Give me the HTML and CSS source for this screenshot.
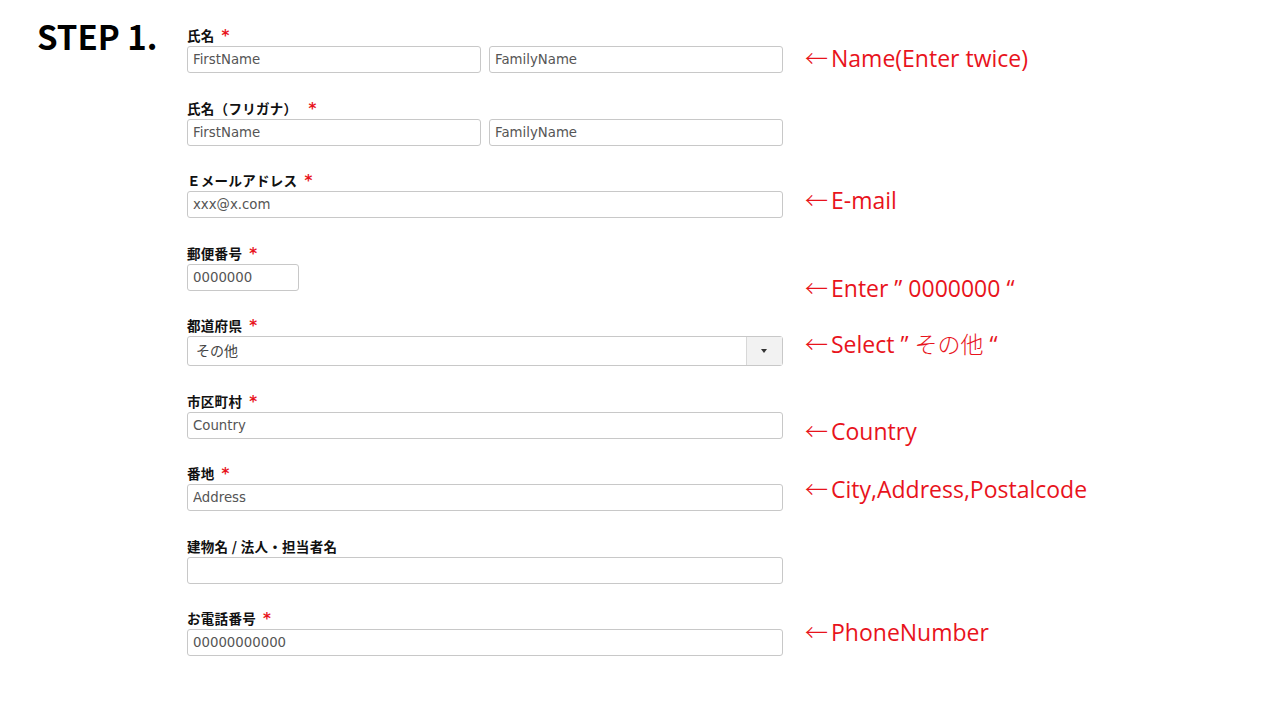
FILE: index.html
```html
<!DOCTYPE html>
<html lang="ja">
<head>
  <meta charset="UTF-8">
  <meta name="viewport" content="width=device-width, initial-scale=1.0">
  <title>STEP 1.</title>
  <link rel="stylesheet" href="styles.css">
</head>
<body>
  <div class="page">
    <h1 class="step-title">STEP 1.</h1>

    <div class="form">
      <div class="row">
        <div class="field">
          <label class="field-label">氏名<span class="req">*</span></label>
          <div class="pair">
            <input type="text" class="text-input" value="FirstName">
            <input type="text" class="text-input" value="FamilyName">
          </div>
        </div>
        <div class="note"><span class="arrow">←</span>Name(Enter twice)</div>
      </div>

      <div class="row">
        <div class="field">
          <label class="field-label">氏名（フリガナ）<span class="req req-wide">*</span></label>
          <div class="pair">
            <input type="text" class="text-input" value="FirstName">
            <input type="text" class="text-input" value="FamilyName">
          </div>
        </div>
      </div>

      <div class="row">
        <div class="field">
          <label class="field-label">Ｅメールアドレス<span class="req">*</span></label>
          <input type="text" class="text-input" value="xxx@x.com">
        </div>
        <div class="note note-mail"><span class="arrow">←</span>E-mail</div>
      </div>

      <div class="row">
        <div class="field">
          <label class="field-label">郵便番号<span class="req">*</span></label>
          <input type="text" class="text-input zip" value="0000000">
        </div>
        <div class="note note-low"><span class="arrow">←</span>Enter ” 0000000 “</div>
      </div>

      <div class="row">
        <div class="field">
          <label class="field-label">都道府県<span class="req">*</span></label>
          <div class="select">
            <span class="select-value">その他</span>
            <span class="select-arrow"></span>
          </div>
        </div>
        <div class="note note-up"><span class="arrow">←</span>Select ” <span class="jp">その他</span> “</div>
      </div>

      <div class="row">
        <div class="field">
          <label class="field-label">市区町村<span class="req">*</span></label>
          <input type="text" class="text-input" value="Country">
        </div>
        <div class="note note-mid"><span class="arrow">←</span>Country</div>
      </div>

      <div class="row">
        <div class="field">
          <label class="field-label">番地<span class="req">*</span></label>
          <input type="text" class="text-input" value="Address">
        </div>
        <div class="note note-high"><span class="arrow">←</span>City,Address,Postalcode</div>
      </div>

      <div class="row">
        <div class="field">
          <label class="field-label">建物名 / 法人・担当者名</label>
          <input type="text" class="text-input" value="">
        </div>
      </div>

      <div class="row">
        <div class="field">
          <label class="field-label">お電話番号<span class="req">*</span></label>
          <input type="text" class="text-input" value="00000000000">
        </div>
        <div class="note note-top"><span class="arrow">←</span>PhoneNumber</div>
      </div>
    </div>
  </div>
</body>
</html>
```

FILE: styles.css
```css
body {
  margin: 0;
  background: #fff;
  color: #111;
  font-family: "Noto Sans CJK JP", "DejaVu Sans", sans-serif;
}
.page {
  display: flex;
  align-items: flex-start;
}
.step-title {
  width: 150px;
  margin: 0;
  padding: 15px 0 0 37px;
  font-family: "Noto Sans CJK JP", sans-serif;
  font-size: 33px;
  font-weight: 700;
  line-height: 42px;
  color: #000;
}
.form {
  padding-top: 27px;
}
.row {
  display: grid;
  grid-template-columns: 596px auto;
  column-gap: 23px;
  align-items: start;
  margin-bottom: 26.5px;
}
.field {
  display: flex;
  flex-direction: column;
}
.field-label {
  height: 17px;
  margin-bottom: 2px;
  font-family: "Noto Sans CJK JP", sans-serif;
  font-size: 13.5px;
  font-weight: 700;
  line-height: 17px;
  letter-spacing: 0.3px;
  color: #111;
  white-space: nowrap;
}
.req {
  margin-left: 7px;
  font-family: "DejaVu Sans", sans-serif;
  font-size: 15px;
  font-weight: 700;
  color: #e8131c;
}
.req-wide {
  margin-left: 11px;
}
.pair {
  display: grid;
  grid-template-columns: 1fr 1fr;
  gap: 8px;
}
.text-input {
  box-sizing: border-box;
  width: 100%;
  height: 27px;
  padding: 0 5px;
  border: 1px solid #c8c8c8;
  border-radius: 3px;
  font-family: "DejaVu Sans", "Noto Sans CJK JP", sans-serif;
  font-size: 13.3px;
  color: #555;
  background: #fff;
}
.text-input.zip {
  width: 112px;
}
.select {
  box-sizing: border-box;
  display: flex;
  height: 30px;
  border: 1px solid #c8c8c8;
  border-radius: 3px;
  background: #fff;
}
.select-value {
  flex: 1;
  padding-left: 8px;
  line-height: 27px;
  font-family: "Noto Sans CJK JP", sans-serif;
  font-size: 14px;
  color: #444;
}
.select-arrow {
  width: 35px;
  border-left: 1px solid #d8d8d8;
  background: #f2f2f2;
  position: relative;
}
.select-arrow::after {
  content: "";
  position: absolute;
  left: 14px;
  top: 12px;
  border-left: 3.5px solid transparent;
  border-right: 3.5px solid transparent;
  border-top: 4px solid #333;
}
.note {
  margin-top: 17px;
  margin-bottom: -40px;
  font-family: "Open Sans", "Noto Sans", sans-serif;
  font-size: 23px;
  line-height: 26px;
  color: #e8131c;
  white-space: nowrap;
}
.arrow {
  font-family: "Noto Sans CJK JP", sans-serif;
  font-weight: 300;
  margin-left: -1px;
  margin-right: 3px;
}
.note-mail {
  margin-top: 14px;
}
.note-low {
  margin-top: 29px;
}
.note-up {
  margin-top: 13px;
}
.note-mid {
  margin-top: 24px;
}
.note-high {
  margin-top: 10px;
}
.note-top {
  margin-top: 8px;
}
.jp {
  font-family: "Noto Sans CJK JP", sans-serif;
  font-weight: 300;
}
```
